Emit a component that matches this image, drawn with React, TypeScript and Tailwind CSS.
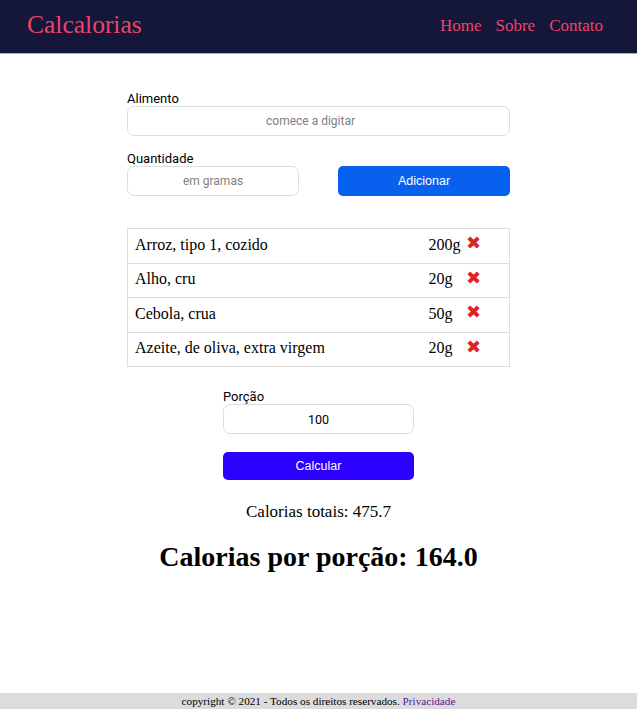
const serif = { fontFamily: '"Liberation Serif", "Times New Roman", serif' }
const sans = { fontFamily: '"Liberation Sans", Arial, sans-serif' }

const itens = [
  { nome: "Arroz, tipo 1, cozido", qtd: "200g" },
  { nome: "Alho, cru", qtd: "20g" },
  { nome: "Cebola, crua", qtd: "50g" },
  { nome: "Azeite, de oliva, extra virgem", qtd: "20g" },
]

function Header() {
  return (
    <header className="flex h-[54px] items-center justify-between border-b border-[#a9a9c4] bg-[#14173a] pb-[3px] pl-[27px] pr-[34px] text-[#ee4466]">
      <h1 className="text-[25.5px] leading-none">Calcalorias</h1>
      <nav className="flex gap-[14px] text-[17px] leading-none">
        <a>Home</a>
        <a>Sobre</a>
        <a>Contato</a>
      </nav>
    </header>
  )
}

export default function App() {
  return (
    <div className="flex min-h-screen flex-col bg-white text-black" style={serif}>
      <Header />
      <main className="flex flex-1 flex-col items-center">
        <div className="mt-[37px] w-[383px] font-['Roboto',sans-serif] text-[13px]">
          <label className="block leading-[15px]">Alimento</label>
          <input
            className="block h-[30px] w-full rounded-[7px] border border-[#dddddd] pr-[16px] text-center text-[12px] placeholder:text-[#808080] outline-none"
            placeholder="comece a digitar"
          />
          <label className="mt-[15px] block leading-[15px]">Quantidade</label>
          <div className="flex justify-between">
            <input
              className="block h-[30px] w-[172px] rounded-[7px] border border-[#dddddd] text-center text-[12px] placeholder:text-[#808080] outline-none"
              placeholder="em gramas"
            />
            <button className="h-[30px] w-[172px] rounded-[5px] bg-[#0860ee] text-[12.5px] text-white" style={sans}>
              Adicionar
            </button>
          </div>
        </div>

        <table className="mt-[32px] w-[383px] border border-[#dddddd] text-[16px]">
          <tbody>
            {itens.map((i) => (
              <tr key={i.nome} className="h-[34.5px] border-b border-[#dddddd] last:border-b-0">
                <td className="pb-[2px] pl-[7px]">{i.nome}</td>
                <td className="w-[37px] pb-[2px] align-middle">{i.qtd}</td>
                <td className="w-[44px] pb-[3px] align-middle">
                  <span className="text-[18px] leading-none text-[#e02424]">✖</span>
                </td>
              </tr>
            ))}
          </tbody>
        </table>

        <div className="mt-[22px] w-[191px] font-['Roboto',sans-serif] text-[13px]">
          <label className="block leading-[15px]">Porção</label>
          <input
            className="block h-[30px] w-full rounded-[7px] border border-[#dddddd] text-center text-[12.5px] outline-none"
            defaultValue="100"
          />
          <button className="mt-[18px] h-[28px] w-full rounded-[5px] bg-[#2c00ff] text-[12.5px] text-white" style={sans}>
            Calcular
          </button>
        </div>

        <p className="mt-[22px] text-[17px] leading-[20px]">Calorias totais: 475.7</p>
        <h2 className="mt-[18px] text-[28px] font-bold leading-[34px]">Calorias por porção: 164.0</h2>
      </main>
      <footer className="h-[16px] bg-[#dcdcdc] text-center text-[11.2px] leading-[16px]">
        copyright © 2021 - Todos os direitos reservados. <a className="text-[#551a8b]">Privacidade</a>
      </footer>
    </div>
  )
}
